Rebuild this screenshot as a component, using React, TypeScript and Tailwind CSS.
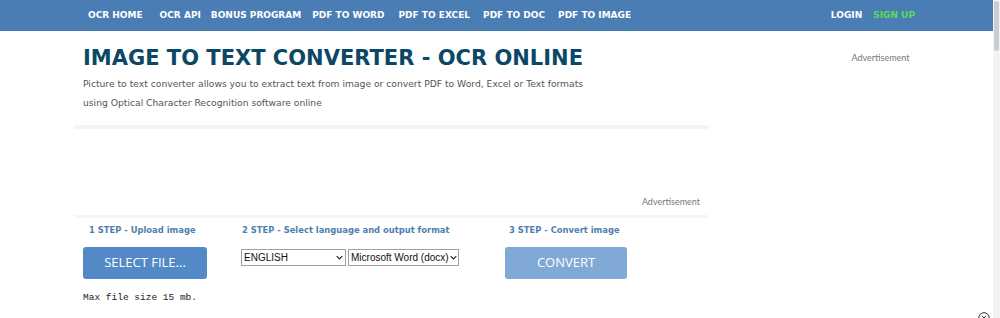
import React from "react";

const navLinks = [
  { label: "OCR HOME", cls: "" },
  { label: "OCR API", cls: "ml-[17px]" },
  { label: "BONUS PROGRAM", cls: "ml-[10px]" },
  { label: "PDF TO WORD", cls: "ml-[11px]" },
  { label: "PDF TO EXCEL", cls: "ml-[14px]" },
  { label: "PDF TO DOC", cls: "ml-[13px]" },
  { label: "PDF TO IMAGE", cls: "ml-[13px]" },
];

function FakeSelect({ value, width }: { value: string; width: string }) {
  return (
    <div
      className={`${width} h-[17px] border border-[#a0a0a0] bg-white flex items-center justify-between gap-[1px] pl-[2px] pr-[2px] text-[10px] text-[#111] font-['Liberation_Sans',sans-serif]`}
    >
      <span className="whitespace-nowrap leading-[14px]">{value}</span>
      <svg viewBox="0 0 10 6" className="w-[7px] h-[5px] shrink-0">
        <path d="M1 1 L5 5 L9 1" fill="none" stroke="#222" strokeWidth="1.6" />
      </svg>
    </div>
  );
}

export default function App() {
  return (
    <div className="flex w-[1000px] h-[318px] overflow-hidden bg-white">
      <div className="relative flex-1 flex flex-col">
        {/* top nav */}
        <nav className="h-[31px] bg-[#4a7db4] flex items-center text-white font-bold text-[9px] font-['DejaVu_Sans',sans-serif] pt-[1px]">
          <div className="flex items-center pl-[88px]">
            {navLinks.map((link) => (
              <a key={link.label} className={`whitespace-nowrap ${link.cls}`}>
                {link.label}
              </a>
            ))}
          </div>
          <div className="flex items-center gap-[11px] ml-auto mr-[78px]">
            <a>LOGIN</a>
            <a className="text-[#5ddc55]">SIGN UP</a>
          </div>
        </nav>

        <div className="flex">
          {/* main column */}
          <div className="ml-[75px] w-[633px] flex flex-col">
            <div className="px-[8px] pt-[12px] pb-[13px]">
              <h1 className="text-[#0b4866] font-bold text-[21px] leading-[30px] font-['DejaVu_Sans',sans-serif]">
                IMAGE TO TEXT CONVERTER - OCR ONLINE
              </h1>
              <p className="text-[#555] text-[9.2px] leading-[19px] mt-[1px] font-['DejaVu_Sans',sans-serif]">
                Picture to text converter allows you to extract text from image or convert PDF to Word, Excel or Text formats
                <br />
                using Optical Character Recognition software online
              </p>
            </div>
            <div className="h-[4px] bg-[#f4f4f4]" />
            <div className="h-[86px] flex items-end justify-end pr-[8px] pb-[7px]">
              <span className="text-[9px] text-[#777] font-['Lato',sans-serif]">Advertisement</span>
            </div>
            <div className="h-[3px] bg-[#f5f5f5]" />

            {/* steps */}
            <div className="flex pl-[8px] pt-[6px] font-['DejaVu_Sans',sans-serif]">
              <div className="w-[158px] flex flex-col">
                <span className="pl-[6px] text-[8.4px] font-bold text-[#4f7fae] leading-[12px] whitespace-nowrap">
                  1 STEP - Upload image
                </span>
                <button className="mt-[11px] w-[124px] h-[32px] rounded-[3px] bg-[#5289c6] text-white text-[13px] font-['Open_Sans',sans-serif]">
                  SELECT FILE...
                </button>
                <span className="mt-[13px] text-[9.5px] text-[#222] font-['Liberation_Mono',monospace] leading-[12px] whitespace-nowrap">
                  Max file size 15 mb.
                </span>
              </div>
              <div className="w-[264px] flex flex-col">
                <span className="pl-[1px] text-[8.4px] font-bold text-[#4f7fae] leading-[12px] whitespace-nowrap">
                  2 STEP - Select language and output format
                </span>
                <div className="mt-[13px] flex gap-[2px]">
                  <FakeSelect value="ENGLISH" width="w-[105px]" />
                  <FakeSelect value="Microsoft Word (docx)" width="w-[111px]" />
                </div>
              </div>
              <div className="flex flex-col">
                <span className="pl-[4px] text-[8.4px] font-bold text-[#4f7fae] leading-[12px] whitespace-nowrap">
                  3 STEP - Convert image
                </span>
                <button className="mt-[11px] w-[122px] h-[32px] rounded-[3px] bg-[#80a9d6] text-white text-[13px] font-['Open_Sans',sans-serif]">
                  CONVERT
                </button>
              </div>
            </div>
          </div>

          {/* sidebar */}
          <div className="flex-1 flex justify-center pt-[20px] pl-[60px]">
            <span className="text-[9px] text-[#777] font-['Lato',sans-serif]">Advertisement</span>
          </div>
        </div>

        {/* ad close button */}
        <div className="absolute right-[3px] bottom-[-6px] w-[12px] h-[12px]">
          <svg viewBox="0 0 12 12" className="w-[12px] h-[12px]">
            <circle cx="6" cy="6" r="5.3" fill="white" stroke="#333" strokeWidth="1" />
            <path d="M3.8 3.8 L8.2 8.2 M8.2 3.8 L3.8 8.2" stroke="#333" strokeWidth="1" />
          </svg>
        </div>
      </div>

      {/* scrollbar */}
      <div className="w-[7px] bg-[#f3f3f3] flex justify-center pt-[1px]">
        <div className="w-[5px] h-[50px] rounded-[3px] bg-[#c9cdd6]" />
      </div>
    </div>
  );
}
